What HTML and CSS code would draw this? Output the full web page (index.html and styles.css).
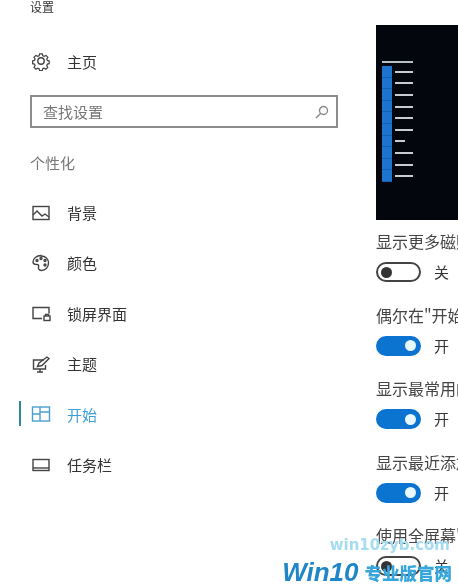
FILE: index.html
```html
<!DOCTYPE html>
<html lang="zh-CN">
<head>
    <meta charset="UTF-8">
    <meta name="viewport" content="width=device-width, initial-scale=1.0">
    <title>设置</title>
    <link rel="stylesheet" href="styles.css">
</head>
<body>
    <div class="page">
        <aside class="sidebar">
            <div class="app-title">设置</div>
            <a class="nav-item home">
                <svg class="icon" viewBox="0 0 20 20"><path d="M8.500 2h3l.5 2.200 1.600.7 2-1.100 2 2.100-1.200 1.900.7 1.600 2 .6v3l-2 .5-.7 1.600 1.100 2-2.100 2-1.900-1.200-1.600.7-.5 2h-3l-.5-2-1.600-.7-1.900 1.200-2.100-2 1.100-2-.7-1.600-2-.5v-3l2-.6.7-1.600-1.200-1.900 2.100-2.100 2 1.100 1.600-.7z" transform="translate(1 1) scale(.9)"/><circle cx="10" cy="10" r="3.200"/></svg>
                <span>主页</span>
            </a>
            <div class="search">
                <span>查找设置</span>
                <svg class="search-icon" viewBox="0 0 14 14"><circle cx="8.500" cy="5.500" r="4"/><path d="M5.500 8.500 1 13"/></svg>
            </div>
            <div class="section-title">个性化</div>
            <nav class="nav">
                <a class="nav-item">
                    <svg class="icon" viewBox="0 0 20 20"><rect x="2" y="3.500" width="16" height="13"/><path d="M2 12l4-4 5 5 3-2 4 3"/></svg>
                    <span>背景</span>
                </a>
                <a class="nav-item">
                    <svg class="icon" viewBox="0 0 20 20"><path d="M10 2.500c-4.500 0-8 3-8 6.500 0 2 2.500 2.500 4 2.500s2 1 1.500 2.500c-.5 2 1 3.500 3 3.500 4 0 7-3.500 7-7.500s-3-7-7.500-7z"/><circle cx="6" cy="7.500" r="1"/><circle cx="10" cy="5.500" r="1"/><circle cx="14" cy="7.500" r="1"/><circle cx="14" cy="12" r="1"/></svg>
                    <span>颜色</span>
                </a>
                <a class="nav-item">
                    <svg class="icon" viewBox="0 0 20 20"><path d="M11 15.500H2v-11h16v6"/><rect x="13" y="13" width="6" height="4.500"/><path d="M14.500 13v-1.500h3V13"/></svg>
                    <span>锁屏界面</span>
                </a>
                <a class="nav-item">
                    <svg class="icon" viewBox="0 0 20 20"><path d="M13 6H2.500v9h12v-4"/><path d="M6.500 12.500l1.500-3.500 8-6 2 1.500-7 7z"/><path d="M6 18h6M9 15v3"/></svg>
                    <span>主题</span>
                </a>
                <a class="nav-item active">
                    <svg class="icon" viewBox="0 0 20 20"><rect x="1.500" y="3" width="17" height="14"/><path d="M9 3v14M1.500 10h7.500M9 8h9.500"/></svg>
                    <span>开始</span>
                </a>
                <a class="nav-item">
                    <svg class="icon" viewBox="0 0 20 20"><rect x="2" y="4.500" width="16" height="11"/><path d="M2 13h16"/></svg>
                    <span>任务栏</span>
                </a>
            </nav>
        </aside>

        <main class="content">
            <div class="preview">
                <div class="preview-head"></div>
                <div class="preview-list">
                    <div class="preview-row"><i></i><b></b></div>
                    <div class="preview-row"><i></i><b></b></div>
                    <div class="preview-row"><i></i><b></b></div>
                    <div class="preview-row"><i></i><b></b></div>
                    <div class="preview-row"><i></i><b></b></div>
                    <div class="preview-row"><i></i><b></b></div>
                    <div class="preview-row"><i></i><b class="short"></b></div>
                    <div class="preview-row"><i></i><b></b></div>
                    <div class="preview-row"><i></i><b></b></div>
                    <div class="preview-row"><i></i><b></b></div>
                </div>
            </div>

            <div class="setting">
                <div class="setting-label">显示更多磁贴</div>
                <div class="toggle-row"><span class="toggle"></span><span>关</span></div>
            </div>
            <div class="setting">
                <div class="setting-label">偶尔在"开始"屏幕上显示建议</div>
                <div class="toggle-row"><span class="toggle on"></span><span>开</span></div>
            </div>
            <div class="setting">
                <div class="setting-label">显示最常用的应用</div>
                <div class="toggle-row"><span class="toggle on"></span><span>开</span></div>
            </div>
            <div class="setting">
                <div class="setting-label">显示最近添加的应用</div>
                <div class="toggle-row"><span class="toggle on"></span><span>开</span></div>
            </div>
            <div class="setting">
                <div class="setting-label">使用全屏幕"开始"屏幕</div>
                <div class="toggle-row"><span class="toggle"></span><span>关</span></div>
            </div>
        </main>

        <div class="watermark">
            <div class="watermark-url">win10zyb.com</div>
            <div class="watermark-logo"><em>Win10</em><strong>专业版官网</strong></div>
        </div>
    </div>
</body>
</html>
```

FILE: styles.css
```css
* {
    box-sizing: border-box;
}
html, body {
    margin: 0;
    height: 100%;
    overflow: hidden;
}
body {
    font-family: "Noto Sans CJK SC", "Liberation Sans", sans-serif;
    background-color: #fff;
    color: #444;
}
.page {
    position: relative;
    display: flex;
    height: 585px;
    overflow: hidden;
    filter: blur(0.6px);
}
.sidebar {
    flex: 0 0 376px;
    padding: 0 38px 0 30px;
}
.app-title {
    height: 14px;
    font-size: 12px;
    line-height: 14px;
    color: #333;
}
.nav-item {
    display: flex;
    align-items: center;
    height: 50.4px;
    margin-left: -11px;
    padding-left: 11px;
    border-left: 2px solid transparent;
    font-size: 15px;
    color: #333;
    position: relative;
}
.nav-item .icon {
    flex: none;
    width: 20px;
    height: 20px;
    margin-left: -1px;
    margin-right: 16px;
    fill: none;
    stroke: #444;
    stroke-width: 1.4;
}
.nav-item.active {
    color: #3d9ed6;
}
.nav-item.active::before {
    content: "";
    position: absolute;
    left: -2px;
    top: 12px;
    width: 2px;
    height: 25px;
    background-color: #2b8a9c;
}
.nav-item.active .icon {
    stroke: #4a9fd0;
}
.home {
    margin-top: 22px;
}
.search {
    display: flex;
    align-items: center;
    justify-content: space-between;
    height: 33px;
    margin-top: 9px;
    padding: 0 7px 0 11px;
    border: 2px solid #8c8c8c;
    font-size: 15px;
    color: #777;
}
.search-icon {
    width: 14px;
    height: 14px;
    fill: none;
    stroke: #888;
    stroke-width: 1.4;
}
.section-title {
    margin-top: 24px;
    font-size: 15px;
    line-height: 22px;
    color: #777;
}
.nav {
    margin-top: 13px;
}
.content {
    flex: 1;
    min-width: 0;
    padding-top: 25px;
    overflow: hidden;
}
.preview {
    height: 195px;
    padding: 36px 0 0 6px;
    background-color: #03060c;
}
.preview-head {
    width: 31px;
    height: 2px;
    background-color: #b9bdc4;
}
.preview-list {
    width: 31px;
    margin-top: 3px;
}
.preview-row {
    display: flex;
    align-items: center;
    gap: 3px;
    height: 11.6px;
}
.preview-row i {
    width: 10px;
    height: 100%;
    border-bottom: 1px solid #155fb0;
    background-color: #1c74cf;
}
.preview-row b {
    width: 18px;
    height: 2px;
    background-color: #c8cbd0;
}
.preview-row b.short {
    width: 10px;
}
.setting {
    width: 300px;
    height: 73.5px;
    padding-top: 11px;
}
.setting-label {
    height: 20px;
    font-size: 16px;
    line-height: 20px;
    white-space: nowrap;
    color: #444;
}
.toggle-row {
    display: flex;
    align-items: center;
    gap: 13px;
    margin-top: 11px;
    font-size: 15px;
    line-height: 20px;
    color: #333;
}
.toggle {
    display: flex;
    align-items: center;
    width: 45px;
    height: 20px;
    padding: 0 3px;
    border: 2px solid #444;
    border-radius: 10px;
}
.toggle::after {
    content: "";
    width: 11px;
    height: 11px;
    border-radius: 50%;
    background-color: #333;
}
.toggle.on {
    justify-content: flex-end;
    border-color: #0a74d0;
    background-color: #0a74d0;
}
.toggle.on::after {
    background-color: #e8f8ff;
}
.watermark {
    position: absolute;
    right: 6px;
    bottom: 0;
    text-align: right;
}
.watermark-url {
    margin-right: 2px;
    margin-bottom: 5px;
    font-family: "DejaVu Sans", sans-serif;
    font-size: 15px;
    font-weight: bold;
    line-height: 18px;
    color: #a5dcf0;
}
.watermark-logo {
    display: flex;
    align-items: center;
    justify-content: flex-end;
    gap: 6px;
    height: 26px;
    white-space: nowrap;
}
.watermark-logo em {
    font-family: "Liberation Sans", sans-serif;
    font-size: 26px;
    font-weight: bold;
    color: #1f86c8;
}
.watermark-logo strong {
    font-size: 17.5px;
    font-weight: 900;
    color: #36a6dc;
}
```
